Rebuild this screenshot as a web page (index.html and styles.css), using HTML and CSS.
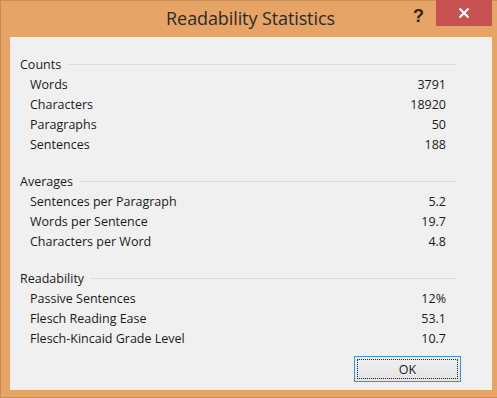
FILE: index.html
```html
<!DOCTYPE html>
<html>
<head>
<meta charset="utf-8">
<link rel="stylesheet" href="styles.css">
</head>
<body>
<div class="window">
  <div class="titlebar">
    <div class="spacer"></div>
    <div class="title">Readability Statistics</div>
    <div class="controls">
      <div class="help">?</div>
      <div class="close">
        <svg width="12" height="12" viewBox="0 0 12 12"><path d="M1.5 1.5 L10.5 10.5 M10.5 1.5 L1.5 10.5" stroke="#fff" stroke-width="2.2" fill="none"/></svg>
      </div>
    </div>
  </div>
  <div class="panel">
    <div class="section">
      <div class="heading"><span>Counts</span><div class="rule"></div></div>
      <div class="row"><span>Words</span><span>3791</span></div>
      <div class="row"><span>Characters</span><span>18920</span></div>
      <div class="row"><span>Paragraphs</span><span>50</span></div>
      <div class="row"><span>Sentences</span><span>188</span></div>
    </div>
    <div class="section">
      <div class="heading"><span>Averages</span><div class="rule"></div></div>
      <div class="row"><span>Sentences per Paragraph</span><span>5.2</span></div>
      <div class="row"><span>Words per Sentence</span><span>19.7</span></div>
      <div class="row"><span>Characters per Word</span><span>4.8</span></div>
    </div>
    <div class="section">
      <div class="heading"><span>Readability</span><div class="rule"></div></div>
      <div class="row"><span>Passive Sentences</span><span>12%</span></div>
      <div class="row"><span>Flesch Reading Ease</span><span>53.1</span></div>
      <div class="row"><span>Flesch-Kincaid Grade Level</span><span>10.7</span></div>
    </div>
    <div class="footer">
      <button class="ok"><span class="focus">OK</span></button>
    </div>
  </div>
</div>
</body>
</html>
```
FILE: styles.css
```css
* { box-sizing: border-box; }
html, body { margin: 0; padding: 0; }
body {
  width: 497px;
  height: 398px;
  font-family: "Open Sans", "Noto Sans", sans-serif;
  background: #e6a466;
}
.window {
  width: 497px;
  height: 398px;
  background: #e6a466;
  border: 1px solid #c98c52;
  border-right: none;
  display: flex;
  flex-direction: column;
}
.titlebar {
  height: 36px;
  display: grid;
  grid-template-columns: 1fr auto 1fr;
  align-items: start;
}
.title {
  font-size: 18px;
  color: #2b2b2b;
  padding-top: 5px;
  padding-left: 3px;
  letter-spacing: -0.1px;
}
.controls {
  display: flex;
  justify-content: flex-end;
  align-items: flex-start;
  padding-right: 5px;
}
.help {
  font-family: "Liberation Sans", sans-serif;
  font-weight: bold;
  font-size: 18px;
  color: #2a2418;
  margin-top: 5px;
  margin-right: 12px;
}
.close {
  width: 56px;
  height: 26px;
  margin-top: -1px;
  background: #c75050;
  display: flex;
  align-items: center;
  justify-content: center;
}
.panel {
  margin-left: 9px;
  width: 482px;
  height: 353px;
  background: #f0f0f0;
  padding: 17px 0 0 10px;
  font-size: 12.5px;
  color: #1a1a1a;
  display: flex;
  flex-direction: column;
}
.section { margin-bottom: 17px; }
.heading {
  height: 20px;
  display: flex;
  align-items: center;
  padding-right: 35px;
}
.rule {
  flex: 1;
  height: 1px;
  background: #dcdcdc;
  margin-left: 6px;
  margin-top: 1px;
}
.row {
  height: 20px;
  display: flex;
  align-items: center;
  justify-content: space-between;
  padding-left: 10px;
  padding-right: 46px;
}
.footer {
  display: flex;
  justify-content: flex-end;
  padding-right: 31px;
  margin-top: -9px;
}
.ok {
  width: 107px;
  height: 26px;
  border: 1px solid #3d8ee0;
  background: linear-gradient(#f1f1f1, #e3e3e3);
  padding: 2px;
  font-family: "Open Sans", sans-serif;
  font-size: 12.5px;
  color: #1a1a1a;
  display: flex;
}
.focus {
  flex: 1;
  border: 1px dotted #222;
  display: flex;
  align-items: center;
  justify-content: center;
}
```
